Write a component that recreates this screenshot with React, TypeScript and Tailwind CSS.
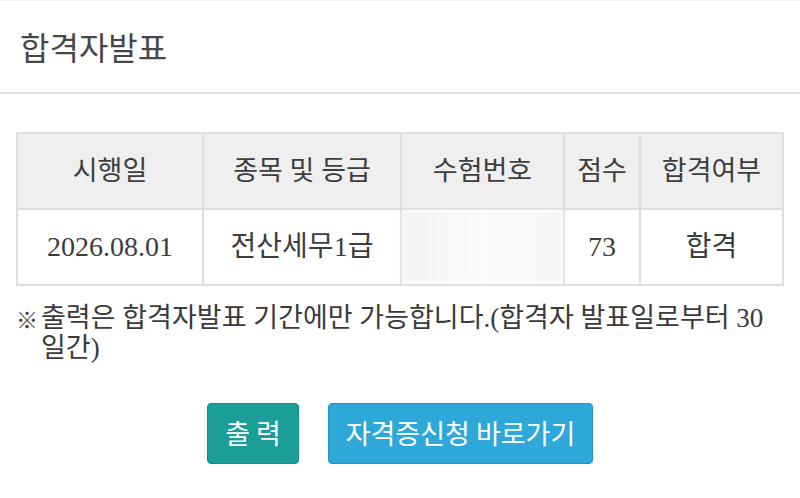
const font = '[font-family:"Liberation_Serif","Noto_Sans_CJK_KR",serif]'

const headers = [
  { label: '시행일', w: 'w-[186px]' },
  { label: '종목 및 등급', w: 'w-[198px]' },
  { label: '수험번호', w: 'w-[163px]' },
  { label: '점수', w: 'w-[76px]' },
  { label: '합격여부', w: 'w-[143px]' },
]

export default function App() {
  return (
    <div className={`w-[800px] h-[498px] bg-white text-[#3d3d3d] ${font}`}>
      {/* title bar */}
      <div className="h-[94px] flex items-center px-[20px] pb-[2px] border-t border-[#f0f0f0] border-b-2 border-b-[#e2e2e2]">
        <h1 className="text-[32px] text-[#474747] [font-family:'Noto_Sans_CJK_KR',sans-serif]">합격자발표</h1>
      </div>

      <div className="px-[16px] pt-[38px]">
        <table className="w-[767px] border-collapse table-fixed border-2 border-[#dedede]">
          <thead>
            <tr className="h-[76px] bg-[#efefef]">
              {headers.map(h => (
                <th key={h.label} className={`${h.w} border-2 border-[#dedede] text-[27px] font-normal text-[#3d3d3d]`}>
                  {h.label}
                </th>
              ))}
            </tr>
          </thead>
          <tbody>
            <tr className="h-[76px] text-center text-[28px]">
              <td className="border-2 border-[#dedede]">2026.08.01</td>
              <td className="border-2 border-[#dedede]">전산세무1급</td>
              <td className="border-2 border-[#dedede] p-0">
                <div className="h-[72px] bg-gradient-to-r from-[#f3f3f3] via-[#fbfbfb] to-[#f6f6f6] blur-[2px]" />
              </td>
              <td className="border-2 border-[#dedede]">73</td>
              <td className="border-2 border-[#dedede]">합격</td>
            </tr>
          </tbody>
        </table>

        {/* notice */}
        <div className="flex mt-[17px] text-[27px] leading-[30px] text-[#3a3a3a]">
          <span className="w-[25px] shrink-0 text-[22px] [font-family:'Noto_Sans_CJK_KR',sans-serif]">※</span>
          <p>출력은 합격자발표 기간에만 가능합니다.(합격자 발표일로부터 30 일간)</p>
        </div>

        {/* buttons */}
        <div className="flex justify-center gap-[29px] mt-[40px]">
          <button className="w-[92px] h-[61px] rounded-[4px] bg-[#1a9e97] border border-[#168a84] text-white text-[27px] [font-family:'Noto_Sans_CJK_KR',sans-serif]">
            출 력
          </button>
          <button className="w-[265px] h-[61px] rounded-[4px] bg-[#2ea8d8] border border-[#2793c0] text-white text-[27px] [font-family:'Noto_Sans_CJK_KR',sans-serif]">
            자격증신청 바로가기
          </button>
        </div>
      </div>
    </div>
  )
}
